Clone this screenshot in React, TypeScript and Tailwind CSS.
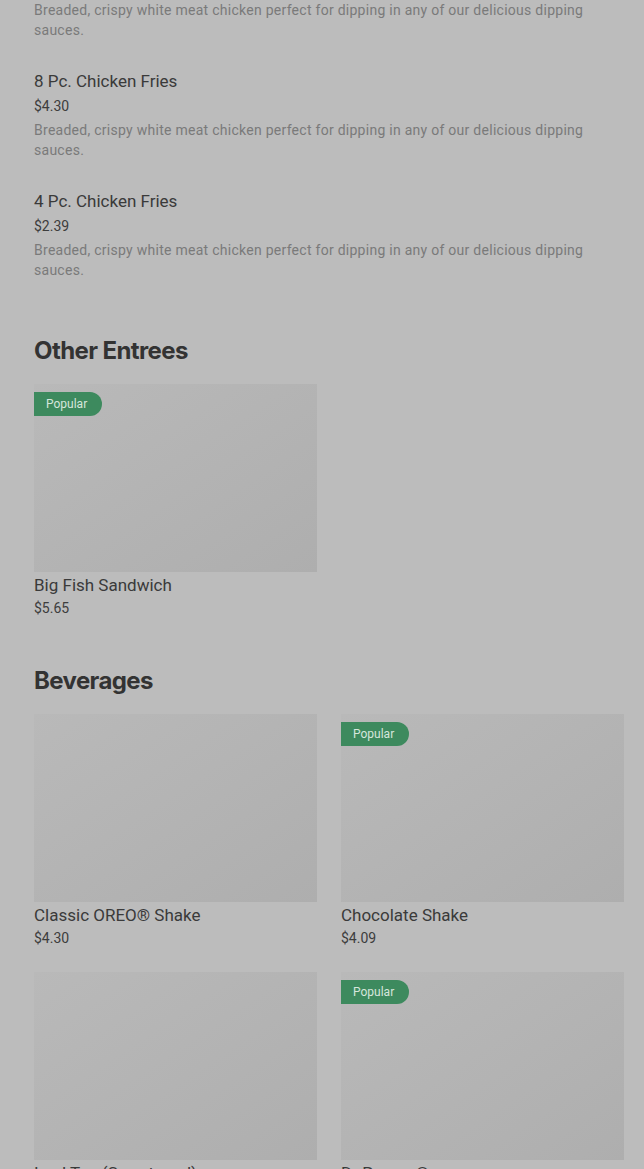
import React from "react";

/* TYPES */
type ListItem = { name: string; price: string; desc: string };
type CardItem = { name: string; price: string; popular?: boolean };

const DESC =
  "Breaded, crispy white meat chicken perfect for dipping in any of our delicious dipping sauces.";

const listItems: ListItem[] = [
  { name: "8 Pc. Chicken Fries", price: "$4.30", desc: DESC },
  { name: "4 Pc. Chicken Fries", price: "$2.39", desc: DESC },
];

const entrees: CardItem[] = [{ name: "Big Fish Sandwich", price: "$5.65", popular: true }];

const beverages: CardItem[] = [
  { name: "Classic OREO® Shake", price: "$4.30" },
  { name: "Chocolate Shake", price: "$4.09", popular: true },
  { name: "Iced Tea (Sweetened)", price: "$2.19" },
  { name: "Dr Pepper®", price: "$2.19", popular: true },
];

function Card({ item }: { item: CardItem }) {
  return (
    <div className="flex flex-col">
      <div className="relative h-[188px] w-full bg-gradient-to-br from-[#b9b9b9] to-[#aeaeae]">
        {item.popular && (
          <span className="absolute left-0 top-2 flex h-6 items-center rounded-r-full bg-[#3d8a5e] pl-3 pr-[15px] text-[12px] text-[#d6e6dc]">
            Popular
          </span>
        )}
      </div>
      <div className="mt-px text-[17px] leading-6 text-[#3a3a3a]">{item.name}</div>
      <div className="mt-px text-[14px] leading-5 text-[#3d3d3d]">{item.price}</div>
    </div>
  );
}

export default function App() {
  return (
    <main className="min-h-[1169px] overflow-hidden bg-[#bcbcbc] pl-[34px] pr-[20px] font-[Roboto,'Liberation_Sans',sans-serif]">
      {/* tail of previous item */}
      <p className="text-[14px] leading-5 tracking-[0.27px] text-[#7a7a7a]">{DESC}</p>

      {listItems.map((it) => (
        <div key={it.name} className="mt-[29px]">
          <div className="text-[17px] leading-6 text-[#3a3a3a]">{it.name}</div>
          <div className="mt-[3px] text-[14px] leading-5 text-[#3d3d3d]">{it.price}</div>
          <p className="mt-1 text-[14px] leading-5 tracking-[0.27px] text-[#7a7a7a]">{it.desc}</p>
        </div>
      ))}

      {/* OTHER ENTREES */}
      <h2 className="mt-[55px] font-[Inter,'Liberation_Sans',sans-serif] text-[24px] font-bold leading-8 tracking-tight text-[#333333]">
        Other Entrees
      </h2>
      <div className="mt-[17px] grid grid-cols-2 gap-x-6 gap-y-6">
        {entrees.map((c) => (
          <Card key={c.name} item={c} />
        ))}
      </div>

      {/* BEVERAGES */}
      <h2 className="mt-[47px] font-[Inter,'Liberation_Sans',sans-serif] text-[24px] font-bold leading-8 tracking-tight text-[#333333]">
        Beverages
      </h2>
      <div className="mt-[17px] grid grid-cols-2 gap-x-6 gap-y-6">
        {beverages.map((c) => (
          <Card key={c.name} item={c} />
        ))}
      </div>
    </main>
  );
}
